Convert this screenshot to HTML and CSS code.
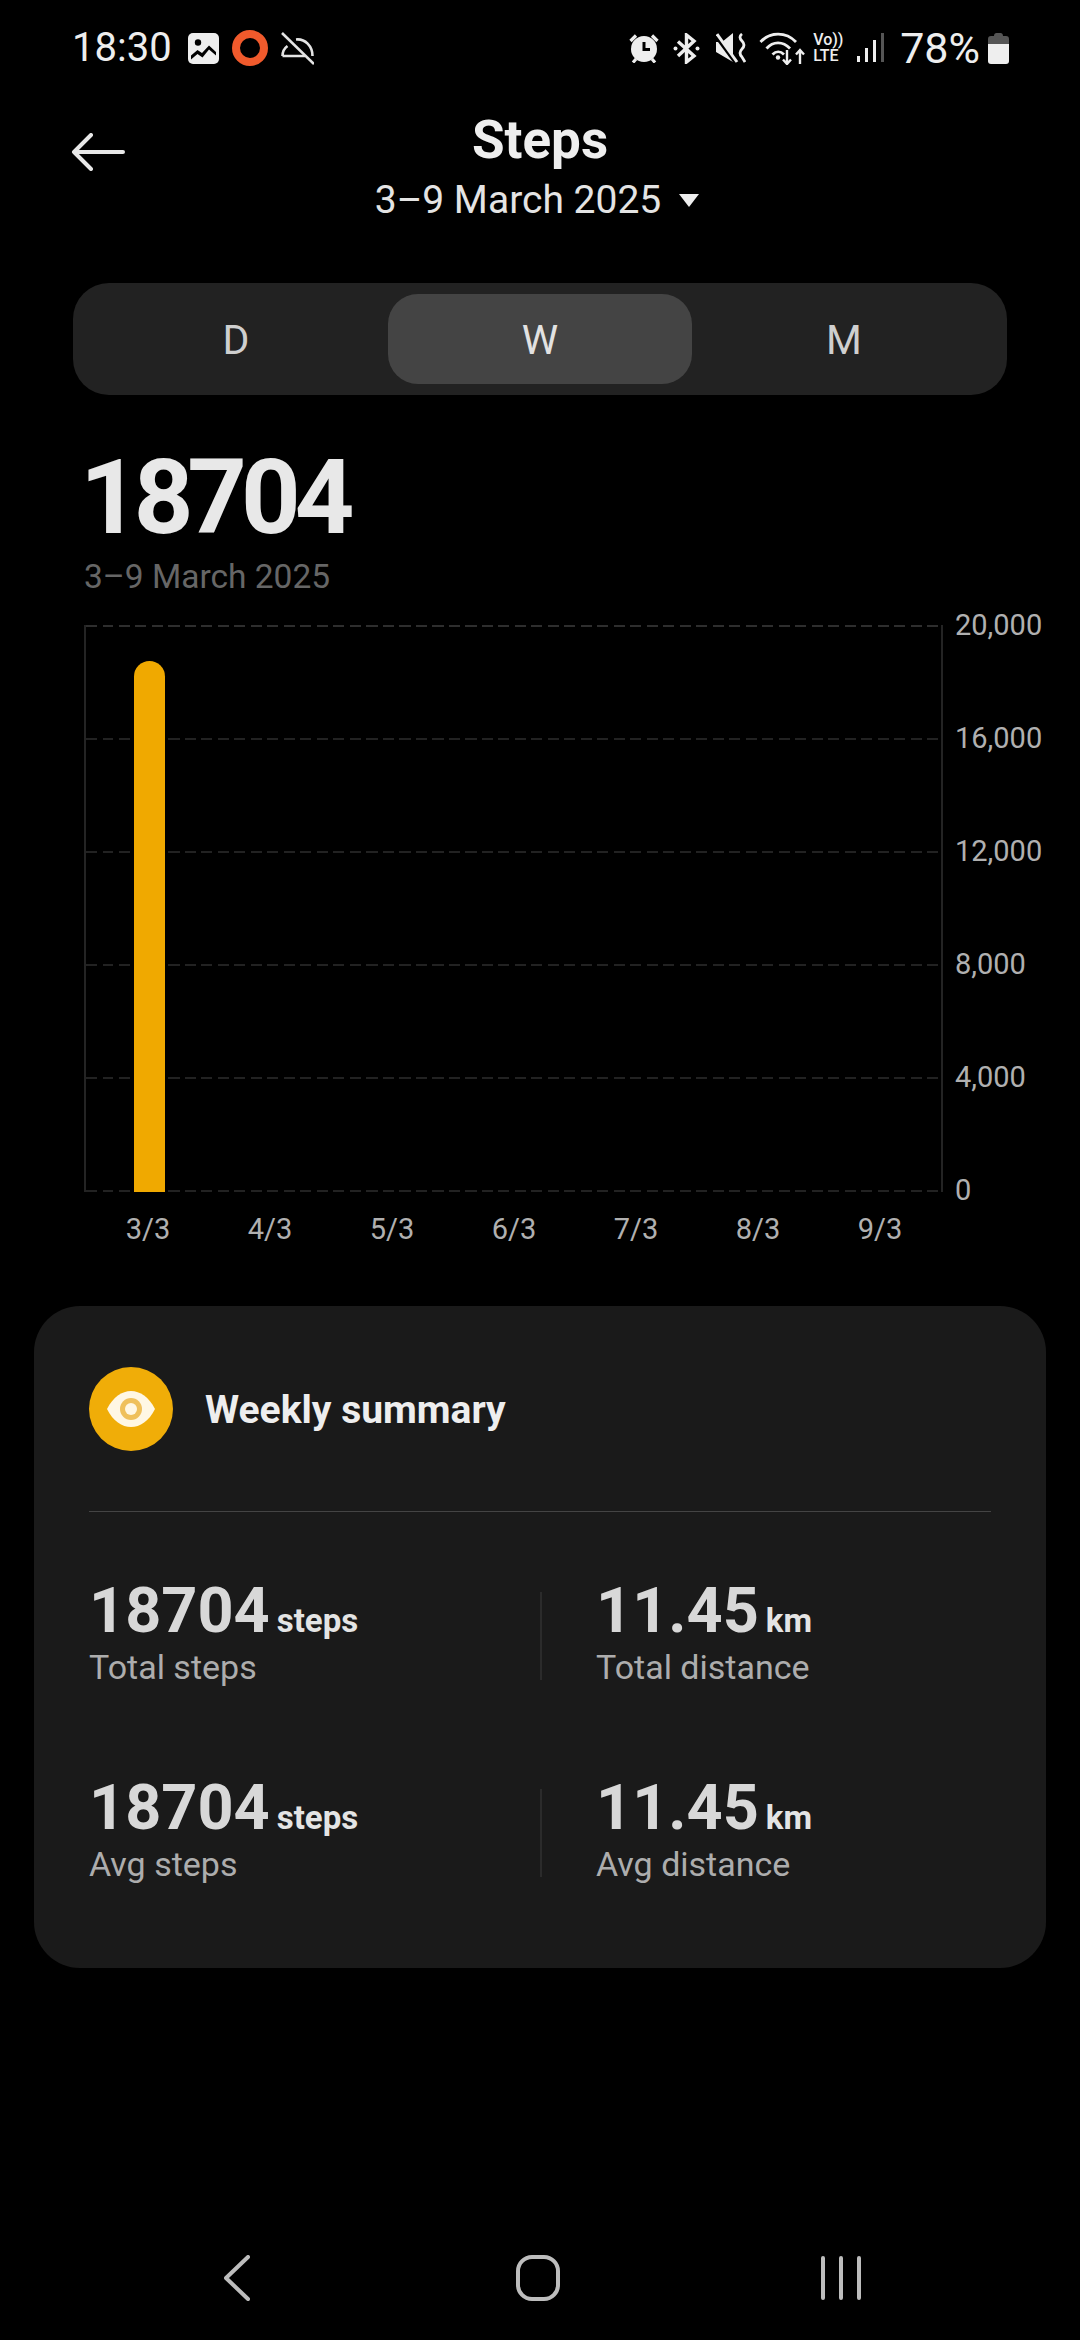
FILE: index.html
```html
<!DOCTYPE html>
<html lang="en">
<head>
<meta charset="utf-8">
<title>Steps</title>
<link rel="stylesheet" href="styles.css">
</head>
<body>
<div class="page">
  <div class="status">
    <div class="status-left">
      <span class="clock">18:30</span>
      <svg class="ic-image" width="31" height="31" viewBox="0 0 31 31"><rect width="31" height="31" rx="5" fill="#eee"/><circle cx="10" cy="9.5" r="3.2" fill="#000"/><path d="M3 22.5 9.5 17 14 20 21 12.5 28 19V22.5L21 16.5 14.5 24.5 9.5 21 3 26.5Z" fill="#000"/></svg>
      <svg class="ic-ring" width="36" height="36" viewBox="0 0 36 36"><circle cx="18" cy="18" r="14" fill="none" stroke="#f05a2c" stroke-width="8"/></svg>
      <svg class="ic-arc" width="33" height="33" viewBox="0 0 33 33" fill="none" stroke="#e4e4e4" stroke-width="2.6"><path d="M1 1 33 32"/><path d="M1.500 24H24M1.500 24C1.500 20 3 16.500 6.500 14M15 7.500C24 6.500 31.500 14 31.500 24"/></svg>
    </div>
    <div class="status-right">
      <svg class="ic-alarm" width="30" height="30" viewBox="0 0 30 30"><circle cx="15" cy="16" r="13" fill="#eee"/><path d="M15 9V16.500H21" fill="none" stroke="#000" stroke-width="3"/><path d="M1.500 8 7 2.500M28.500 8 23 2.500M4 29.500 7 26M26 29.500 23 26" stroke="#eee" stroke-width="3.200" fill="none"/></svg>
      <svg class="ic-bt" width="27" height="31" viewBox="0 0 27 31" fill="none" stroke="#eee" stroke-width="3.400"><path d="M5 8.500 21 23 13.500 29V2L21 8 5 23"/><circle cx="2.500" cy="15.500" r="2" fill="#eee" stroke="none"/><circle cx="24.500" cy="15.500" r="2" fill="#eee" stroke="none"/></svg>
      <svg class="ic-mute" width="30" height="30" viewBox="0 0 30 30"><path d="M0 9H6L17 0V29L0 19Z" fill="#eee"/><path d="M0 3 20 30" stroke="#000" stroke-width="4"/><path d="M1 1 21 29" stroke="#eee" stroke-width="3"/><path d="M26 1 Q22 4 26 8 Q30 12 26 16 Q22 20 26 24 L29 29" fill="none" stroke="#eee" stroke-width="2.800"/></svg>
      <svg class="ic-wifi" width="46" height="33" viewBox="0 0 46 33" fill="none" stroke="#eee" stroke-width="2.800"><path d="M1.500 10C11 -0.500 27 -0.500 37 10"/><path d="M7.500 16.500C14 9 24 9 31 16.500"/><path d="M13.500 22.500C17 19 21.500 19 25 22.500"/><circle cx="19" cy="25.500" r="2.200" fill="#eee" stroke="none"/><path d="M28 18V32M24 27.500 28 32 32 27.500M41 32V18M37 22.500 41 18 45 22.500" stroke-width="2.400"/></svg>
      <div class="volte"><span>Vo))</span><span>LTE</span></div>
      <svg class="ic-signal" width="28" height="30" viewBox="0 0 28 30"><rect x="0" y="23" width="3" height="6" fill="#eee"/><rect x="8" y="15" width="3" height="14" fill="#eee"/><rect x="16" y="7" width="3" height="22" fill="#eee"/><rect x="24" y="0" width="3" height="29" fill="#555"/></svg>
      <span class="pct">78%</span>
      <svg class="ic-batt" width="21" height="31" viewBox="0 0 21 31"><path d="M6 3C6 1 7 0 8.500 0H12.500C14 0 15 1 15 3H18C20 3 21 4 21 6V11H0V6C0 4 1 3 3 3Z" fill="#555"/><path d="M0 11H21V28C21 30 20 31 18 31H3C1 31 0 30 0 28Z" fill="#eee"/></svg>
    </div>
  </div>

  <header class="head">
    <svg class="back" width="54" height="38" viewBox="0 0 54 38" fill="none" stroke="#e8e8e8" stroke-width="4" stroke-linecap="round" stroke-linejoin="round"><path d="M52 19H3M20 2 3 19 20 36"/></svg>
    <div class="head-titles">
      <h1 class="title">Steps</h1>
      <div class="range"><span>3–9 March 2025</span><i class="caret"></i></div>
    </div>
  </header>

  <div class="tabs">
    <div class="tab">D</div>
    <div class="tab tab-on">W</div>
    <div class="tab">M</div>
  </div>

  <div class="big">18704</div>
  <div class="big-sub">3–9 March 2025</div>

  <section class="chart">
    <div class="plot">
      <div class="band band-top"></div><div class="band"></div><div class="band"></div><div class="band"></div><div class="band"></div><div class="band band-last"></div>
      <div class="bars">
        <div class="slot"><div class="bar" style="height:93.6%"></div></div>
        <div class="slot"></div><div class="slot"></div><div class="slot"></div><div class="slot"></div><div class="slot"></div><div class="slot"></div>
      </div>
    </div>
    <div class="yaxis">
      <span>20,000</span><span>16,000</span><span>12,000</span><span>8,000</span><span>4,000</span><span>0</span>
    </div>
  </section>
  <div class="xaxis">
    <span>3/3</span><span>4/3</span><span>5/3</span><span>6/3</span><span>7/3</span><span>8/3</span><span>9/3</span>
  </div>

  <section class="card">
    <div class="card-head">
      <div class="badge">
        <svg width="48" height="36" viewBox="0 0 48 36"><path d="M0 18C6 6 15 0 24 0S42 6 48 18C42 30 33 36 24 36S6 30 0 18Z" fill="#fff7e4"/><circle cx="24" cy="18" r="11" fill="#efc05c"/><circle cx="24" cy="18" r="6" fill="#fff7e4"/></svg>
      </div>
      <h2 class="card-title">Weekly summary</h2>
    </div>
    <div class="stats">
      <div class="stat"><div class="val"><b>18704</b><em>steps</em></div><div class="lbl">Total steps</div></div>
      <div class="stat stat-r"><div class="val"><b>11.45</b><em>km</em></div><div class="lbl">Total distance</div></div>
      <div class="stat"><div class="val"><b>18704</b><em>steps</em></div><div class="lbl">Avg steps</div></div>
      <div class="stat stat-r"><div class="val"><b>11.45</b><em>km</em></div><div class="lbl">Avg distance</div></div>
    </div>
  </section>

  <nav class="nav">
    <svg width="26" height="46" viewBox="0 0 26 46" fill="none" stroke="#bdbdbd" stroke-width="4" stroke-linecap="round" stroke-linejoin="round"><path d="M24 2 2 23 24 44"/></svg>
    <svg class="nav-home" width="44" height="46" viewBox="0 0 44 46" fill="none" stroke="#bdbdbd" stroke-width="4"><rect x="2" y="2" width="40" height="42" rx="14"/></svg>
    <svg width="40" height="44" viewBox="0 0 40 44" fill="none" stroke="#bdbdbd" stroke-width="4" stroke-linecap="round"><path d="M2 2V42M20 2V42M38 2V42"/></svg>
  </nav>
</div>
</body>
</html>
```
FILE: styles.css
```css
* { box-sizing: border-box; }
html, body { margin: 0; padding: 0; background: #000; }
.page {
  width: 1080px;
  height: 2340px;
  overflow: hidden;
  background: #000;
  color: #eee;
  font-family: Roboto, "Noto Sans", sans-serif;
  display: flex;
  flex-direction: column;
}
svg { display: block; flex: none; }

.status {
  margin-top: 30px;
  height: 36px;
  padding: 0 71px 0 72px;
  display: flex;
  justify-content: space-between;
  align-items: center;
}
.status-left, .status-right { display: flex; align-items: center; }
.clock { font-size: 40px; line-height: 36px; color: #eee; }
.pct { font-size: 43px; line-height: 36px; color: #eee; }
.ic-image { margin-left: 16px; }
.ic-ring { margin-left: 13px; }
.ic-arc { margin-left: 13px; }
.ic-bt { margin-left: 14px; }
.ic-mute { margin-left: 16px; }
.ic-wifi { margin-left: 13px; }
.volte {
  margin-left: 8px;
  width: 31px;
  display: flex;
  flex-direction: column;
  font-size: 16px;
  line-height: 16px;
  font-weight: 500;
  color: #eee;
}
.ic-signal { margin-left: 13px; }
.pct { margin-left: 15px; }
.ic-batt { margin-left: 8px; }

.head {
  margin-top: 44px;
  height: 110px;
  position: relative;
  display: flex;
  justify-content: center;
}
.back { position: absolute; left: 71px; top: 23px; }
.head-titles { display: flex; flex-direction: column; align-items: center; }
.title { margin: 0; font-size: 53px; line-height: 60px; font-weight: 700; color: #eee; }
.range { margin: 7px 0 0 -6px; display: flex; align-items: center; gap: 18px; font-size: 39px; line-height: 46px; color: #e4e4e4; }
.caret { display: block; width: 0; height: 0; border-left: 10px solid transparent; border-right: 10px solid transparent; border-top: 13px solid #eee; }

.tabs {
  margin: 63px 73px 0;
  height: 112px;
  padding: 11px;
  border-radius: 36px;
  background: #222;
  display: grid;
  grid-template-columns: repeat(3, 304px);
}
.tab { display: flex; align-items: center; justify-content: center; padding-top: 2px; font-size: 41px; color: #cfcfcf; border-radius: 30px; }
.tab-on { background: #444; color: #e2e2e2; }

.big {
  margin: 48px 0 0 80px;
  font-size: 104px;
  line-height: 110px;
  font-weight: 700;
  letter-spacing: -6px;
  color: #e8e8e8;
}
.big-sub { margin: 4px 0 0 84px; font-size: 33.5px; line-height: 40px; color: #666; }

.chart { margin: 28px 0 0 84px; display: flex; align-items: flex-start; }
.plot {
  position: relative;
  width: 859px;
  height: 567px;
  border-left: 2px solid #242424;
  border-right: 2px solid #242424;
}
.band {
  height: 113px;
  background: repeating-linear-gradient(90deg, #222 0 11px, transparent 11px 16.5px) top left / 100% 2px no-repeat;
}
.band-top {
  background: repeating-linear-gradient(90deg, #2e2e2e 0 11px, transparent 11px 16.5px) top left / 100% 2px no-repeat;
}
.band-last { height: 2px; }
.bars {
  position: absolute;
  left: 2px;
  right: 0;
  top: 0;
  bottom: 0;
  display: grid;
  grid-template-columns: repeat(7, 122px);
}
.slot { display: flex; align-items: flex-end; justify-content: center; }
.bar { width: 31px; background: #f0a900; border-radius: 15.5px 15.5px 0 0; }

.yaxis {
  margin: -18px 0 0 12px;
  height: 601px;
  display: flex;
  flex-direction: column;
  justify-content: space-between;
  font-size: 29px;
  line-height: 36px;
  color: #b0b0b0;
}

.xaxis {
  margin: 3px 0 0 87px;
  display: grid;
  grid-template-columns: repeat(7, 122px);
  text-align: center;
  font-size: 29px;
  line-height: 36px;
  color: #b0b0b0;
}

.card {
  margin: 59px 34px 0;
  height: 662px;
  border-radius: 46px;
  background: #1a1a1a;
  padding: 61px 55px 0;
}
.card-head {
  height: 145px;
  display: flex;
  align-items: flex-start;
  gap: 32px;
  border-bottom: 1px solid #444;
}
.badge {
  width: 84px;
  height: 84px;
  border-radius: 50%;
  background: #f0ad08;
  display: flex;
  align-items: center;
  justify-content: center;
}
.card-title { margin: 0; font-size: 39px; line-height: 86px; font-weight: 700; color: #eee; }

.stats {
  margin-top: 80px;
  display: grid;
  grid-template-columns: 451px 1fr;
  grid-auto-rows: 197px;
}
.stat { height: 88px; }
.stat-r { padding-left: 54px; border-left: 2px solid #2b2b2b; }
.val { display: flex; align-items: baseline; gap: 7px; height: 60px; line-height: 60px; margin-top: -11px; }
.val b { font-size: 63px; font-weight: 700; color: #d8d8d8; }
.val em { font-style: normal; font-size: 33px; font-weight: 700; color: #e4e4e4; }
.lbl { margin-top: 8px; font-size: 34px; line-height: 36px; color: #adadad; }

.nav {
  margin-top: 287px;
  display: flex;
  justify-content: space-between;
  align-items: center;
  padding: 0 219px 0 224px;
}
.nav-home { margin-left: 5px; }
```
